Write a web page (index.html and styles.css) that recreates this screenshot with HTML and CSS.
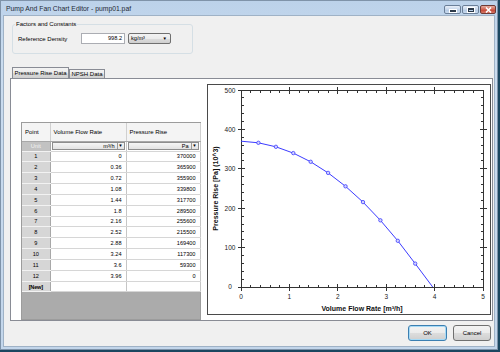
FILE: index.html
```html
<!DOCTYPE html>
<html lang="en">
<head>
    <meta charset="UTF-8">
    <title>Pump And Fan Chart Editor - pump01.paf</title>
    <link rel="stylesheet" href="styles.css">
</head>
<body>
    <div class="window">
        <div class="titlebar">
            <span class="title">Pump And Fan Chart Editor - pump01.paf</span>
            <div class="caption-buttons">
                <span class="cap-btn"><span class="glyph-min"></span></span>
                <span class="cap-btn"><span class="glyph-max"></span></span>
                <span class="cap-btn close">
                    <svg width="7" height="6" viewBox="0 0 7 6"><path d="M1 0.5l5 5M6 0.5l-5 5" stroke="#fff" stroke-width="1.6"/></svg>
                </span>
            </div>
        </div>

        <div class="client">
            <fieldset class="group">
                <legend>Factors and Constants</legend>
                <div class="field-row">
                    <label>Reference Density</label>
                    <span class="textbox">998.2</span>
                    <span class="combo">kg/m³<span class="combo-arrow">▼</span></span>
                </div>
            </fieldset>

            <div class="tabs">
                <span class="tab active">Pressure Rise Data</span>
                <span class="tab">NPSH Data</span>
            </div>

            <div class="tab-panel">
                <div class="sheet">
                    <table>
                        <colgroup>
                            <col class="col-point">
                            <col class="col-flow">
                            <col class="col-rise">
                        </colgroup>
                        <thead>
                            <tr>
                                <th>Point</th>
                                <th>Volume Flow Rate</th>
                                <th>Pressure Rise</th>
                            </tr>
                        </thead>
                        <tbody>
                            <tr class="unit-row">
                                <td class="rowhead unit">Unit</td>
                                <td><span class="cell-combo">m³/h<span class="cell-arrow">▼</span></span></td>
                                <td><span class="cell-combo">Pa<span class="cell-arrow">▼</span></span></td>
                            </tr>
                            <tr><td class="rowhead">1</td><td>0</td><td>370000</td></tr>
                            <tr><td class="rowhead">2</td><td>0.36</td><td>365900</td></tr>
                            <tr><td class="rowhead">3</td><td>0.72</td><td>355900</td></tr>
                            <tr><td class="rowhead">4</td><td>1.08</td><td>339800</td></tr>
                            <tr><td class="rowhead">5</td><td>1.44</td><td>317700</td></tr>
                            <tr><td class="rowhead">6</td><td>1.8</td><td>289500</td></tr>
                            <tr><td class="rowhead">7</td><td>2.16</td><td>255600</td></tr>
                            <tr><td class="rowhead">8</td><td>2.52</td><td>215500</td></tr>
                            <tr><td class="rowhead">9</td><td>2.88</td><td>169400</td></tr>
                            <tr><td class="rowhead">10</td><td>3.24</td><td>117300</td></tr>
                            <tr><td class="rowhead">11</td><td>3.6</td><td>59300</td></tr>
                            <tr><td class="rowhead">12</td><td>3.96</td><td>0</td></tr>
                            <tr><td class="rowhead new">[New]</td><td></td><td></td></tr>
                        </tbody>
                    </table>
                </div>

                <div class="chart">
                    <svg width="282" height="229" viewBox="0 0 282 229">
                        <g stroke="#333" stroke-width="1" fill="none">
                            <rect x="33.5" y="5.5" width="242" height="197"/>
                            <!-- major ticks -->
                            <path d="M33.5 203v3M81.5 199v7M129.5 199v7M178.5 199v7M226.5 199v7M275.5 203v3
                                     M81.5 2v7M129.5 2v7M178.5 2v7M226.5 2v7
                                     M30 202.5h3M30 162.5h7M30 123.5h7M30 83.5h7M30 44.5h7M30 5.5h3
                                     M272 162.5h7M272 123.5h7M272 83.5h7M272 44.5h7"/>
                            <!-- minor ticks -->
                            <path d="M42.5 202v-2M52.5 202v-2M62.5 202v-2M71.5 202v-2M91.5 202v-2M100.5 202v-2M110.5 202v-2M120.5 202v-2M139.5 202v-2M149.5 202v-2M158.5 202v-2M168.5 202v-2M187.5 202v-2M197.5 202v-2M207.5 202v-2M216.5 202v-2M236.5 202v-2M246.5 202v-2M255.5 202v-2M265.5 202v-2
                                     M42.5 6v2M52.5 6v2M62.5 6v2M71.5 6v2M91.5 6v2M100.5 6v2M110.5 6v2M120.5 6v2M139.5 6v2M149.5 6v2M158.5 6v2M168.5 6v2M187.5 6v2M197.5 6v2M207.5 6v2M216.5 6v2M236.5 6v2M246.5 6v2M255.5 6v2M265.5 6v2
                                     M34 194.5h2M34 186.5h2M34 178.5h2M34 170.5h2M34 154.5h2M34 146.5h2M34 139.5h2M34 131.5h2M34 115.5h2M34 107.5h2M34 99.5h2M34 91.5h2M34 75.5h2M34 68.5h2M34 60.5h2M34 52.5h2M34 36.5h2M34 28.5h2M34 20.5h2M34 12.5h2
                                     M275 194.5h-2M275 186.5h-2M275 178.5h-2M275 170.5h-2M275 154.5h-2M275 146.5h-2M275 139.5h-2M275 131.5h-2M275 115.5h-2M275 107.5h-2M275 99.5h-2M275 91.5h-2M275 75.5h-2M275 68.5h-2M275 60.5h-2M275 52.5h-2M275 36.5h-2M275 28.5h-2M275 20.5h-2M275 12.5h-2"/>
                        </g>

                        <g class="tick-label" text-anchor="middle">
                            <text x="22" y="7.5">500</text>
                            <text x="22" y="46.7">400</text>
                            <text x="22" y="86">300</text>
                            <text x="22" y="125.5">200</text>
                            <text x="22" y="165">100</text>
                            <text x="22" y="204.3">0</text>
                            <text x="33" y="214">0</text>
                            <text x="81.4" y="214">1</text>
                            <text x="129.8" y="214">2</text>
                            <text x="178.2" y="214">3</text>
                            <text x="226.6" y="214">4</text>
                            <text x="275" y="214">5</text>
                        </g>

                        <text class="axis-title" x="154" y="225.5" text-anchor="middle">Volume Flow Rate [m³/h]</text>
                        <text class="axis-title" x="0" y="0" text-anchor="middle" transform="translate(10 103.5) rotate(-90)">Pressure Rise [Pa] (10^3)</text>

                        <polyline class="curve" points="33,56.2 50.4,57.8 67.9,61.8 85.3,68.1 102.7,76.8 120.1,87.9 137.5,101.3 155,117.1 172.4,135.3 189.8,155.8 207.2,178.6 224.7,202"/>
                        <g class="marker">
                            <circle cx="50.4" cy="57.8" r="1.7"/>
                            <circle cx="67.9" cy="61.8" r="1.7"/>
                            <circle cx="85.3" cy="68.1" r="1.7"/>
                            <circle cx="102.7" cy="76.8" r="1.7"/>
                            <circle cx="120.1" cy="87.9" r="1.7"/>
                            <circle cx="137.5" cy="101.3" r="1.7"/>
                            <circle cx="155" cy="117.1" r="1.7"/>
                            <circle cx="172.4" cy="135.3" r="1.7"/>
                            <circle cx="189.8" cy="155.8" r="1.7"/>
                            <circle cx="207.2" cy="178.6" r="1.7"/>
                        </g>
                    </svg>
                </div>
            </div>

            <div class="footer">
                <button class="btn default">OK</button>
                <button class="btn cancel">Cancel</button>
            </div>
        </div>
    </div>
</body>
</html>
```

FILE: styles.css
```css
:root {
    --desktop: #1b4760;
    --frame-border: #7f93a9;
    --face: #f0f0f0;
    --tab-border: #898c95;
    --grid-line: #d6d6d6;
    --row-head: #d6d6d6;
    --curve: #3c3cff;
    --button-face: linear-gradient(#f3f3f3, #ebebeb 50%, #dddddd 51%, #cfcfcf);
}

* {
    box-sizing: border-box;
}

body {
    margin: 0;
    background-color: var(--desktop);
    font-family: "Liberation Sans", Arial, sans-serif;
    font-size: 6px;
    color: #000;
}

.window {
    width: 498px;
    height: 350px;
    border: 1px solid var(--frame-border);
    background: linear-gradient(#bcd2ea, #cadcef 60px, #c3d6eb);
    display: flex;
    flex-direction: column;
}

.titlebar {
    height: 14px;
    display: flex;
    justify-content: space-between;
    padding: 0 1px 0 5px;
}

.title {
    font-size: 6.8px;
    line-height: 15px;
    color: #1e2a36;
}

.caption-buttons {
    display: flex;
    gap: 1px;
    margin-top: 4px;
}

.cap-btn {
    width: 17px;
    height: 9px;
    border: 1px solid #6b7f98;
    border-radius: 2px;
    background: linear-gradient(#e7eef8, #c6d6ea 50%, #b1c7e2 51%, #cbdcef);
    display: flex;
    align-items: center;
    justify-content: center;
}

.cap-btn.close {
    width: 16px;
    border-color: #6e3a35;
    background: linear-gradient(#e4ac9f, #d0604f 50%, #c13f2e 51%, #d47766);
}

.glyph-min {
    width: 6px;
    height: 2px;
    margin-top: 2px;
    background-color: #2c3a4a;
    box-shadow: 0 0 0 1px #fff;
}

.glyph-max {
    width: 6px;
    height: 4px;
    border: 1px solid #2c3a4a;
    border-top-width: 2px;
    box-shadow: 0 0 0 1px #fff;
}

.client {
    flex: 1;
    margin: 0 2px 2px 2px;
    background-color: var(--face);
    border: 1px solid #9fb2c6;
    display: flex;
    flex-direction: column;
    padding: 0 1px 0 6px;
}

/* Factors and Constants */
.group {
    margin: 4px 0 0 2px;
    width: 181px;
    height: 34px;
    border: 1px solid #d5dfe5;
    border-radius: 3px;
    padding: 0 5px;
}

.group legend {
    margin-left: -3px;
    padding: 0 1px;
    line-height: 9px;
}

.field-row {
    display: flex;
    align-items: center;
    height: 11px;
    margin-top: 4px;
}

.field-row label {
    width: 63px;
}

.textbox {
    width: 44px;
    height: 11px;
    border: 1px solid #abadb3;
    background-color: #fff;
    text-align: right;
    padding-right: 2px;
    line-height: 9px;
    font-size: 5.6px;
}

.combo {
    margin-left: 3px;
    width: 43px;
    height: 11px;
    border: 1px solid #707070;
    border-radius: 2px;
    background: var(--button-face);
    display: flex;
    justify-content: space-between;
    padding: 0 3px 0 2px;
    line-height: 9px;
    font-size: 5.6px;
}

.combo-arrow,
.cell-arrow {
    font-size: 4.5px;
}

/* Tabs */
.tabs {
    display: flex;
    align-items: flex-end;
    height: 11px;
    margin-top: 13px;
    padding-left: 2px;
}

.tab {
    width: 36px;
    height: 9px;
    border: 1px solid var(--tab-border);
    border-bottom: none;
    background: var(--button-face);
    text-align: center;
    white-space: nowrap;
    line-height: 8px;
}

.tab.active {
    width: 57px;
    height: 11px;
    background-color: #fff;
    line-height: 10px;
}

.tab-panel {
    height: 243px;
    border: 1px solid var(--tab-border);
    background-color: #fff;
    display: flex;
    gap: 6px;
    padding: 5px 0 0 10px;
}

/* Data sheet */
.sheet {
    align-self: flex-end;
    width: 180px;
    height: 198px;
    border: 1px solid #9c9c9c;
    background-color: #ababab;
}

.sheet table {
    width: 178px;
    border-collapse: collapse;
    table-layout: fixed;
}

.col-point {
    width: 28px;
}

.col-flow {
    width: 76px;
}

.col-rise {
    width: 74px;
}

.sheet th {
    height: 18px;
    padding: 0 0 0 3px;
    text-align: left;
    font-weight: normal;
    background-color: #f4f4f4;
    border-right: 1px solid #d0d0d0;
    border-bottom: 1px solid #a8a8a8;
}

.sheet td {
    height: 10.85px;
    padding: 0 4px 0 0;
    text-align: right;
    font-size: 5.6px;
    line-height: 8px;
    background-color: #fff;
    border-right: 1px solid #c6c6c6;
    border-bottom: 1px solid var(--grid-line);
}

.sheet .unit-row td {
    height: 10px;
    padding: 0 1px;
}

.sheet td.rowhead {
    padding: 0;
    text-align: center;
    background-color: var(--row-head);
    border-right: 1px solid #a8a8a8;
    border-bottom: 1px solid #f2f2f2;
}

.sheet td.unit {
    background-color: #c2c2c2;
    color: #f4f4f4;
}

.sheet td.new {
    font-weight: bold;
    letter-spacing: -0.2px;
}

.cell-combo {
    display: flex;
    justify-content: flex-end;
    align-items: center;
    gap: 2px;
    height: 8px;
    border: 1px solid #8d8d8d;
    background: linear-gradient(#f5f5f5, #e2e2e2);
    padding-left: 2px;
    line-height: 6px;
}

.cell-arrow {
    width: 7px;
    height: 6px;
    border-left: 1px solid #9a9a9a;
    text-align: center;
    line-height: 6px;
}

/* Chart */
.chart {
    align-self: flex-start;
    width: 284px;
    height: 231px;
    border: 1px solid #4a4a4a;
    background-color: #fff;
}

.chart svg {
    display: block;
}

.tick-label {
    font-family: "Liberation Sans", sans-serif;
    font-size: 6.5px;
    fill: #222;
}

.axis-title {
    font-family: "Liberation Sans", sans-serif;
    font-size: 7px;
    font-weight: bold;
    fill: #111;
}

.curve {
    fill: none;
    stroke: var(--curve);
    stroke-width: 1;
}

.marker circle {
    fill: #d4d4ff;
    stroke: var(--curve);
    stroke-width: 0.8;
}

/* Dialog buttons */
.footer {
    display: flex;
    justify-content: flex-end;
    gap: 6px;
    margin-top: 4px;
    padding-right: 2px;
}

.btn {
    width: 38px;
    height: 16px;
    padding: 0;
    border: 1px solid #707070;
    border-radius: 3px;
    background: var(--button-face);
    font-family: inherit;
    font-size: 6px;
    color: #000;
}

.btn.default {
    width: 39px;
    border-color: #3c7fb1;
    box-shadow: inset 0 0 0 1px #a6daf6;
}
```
